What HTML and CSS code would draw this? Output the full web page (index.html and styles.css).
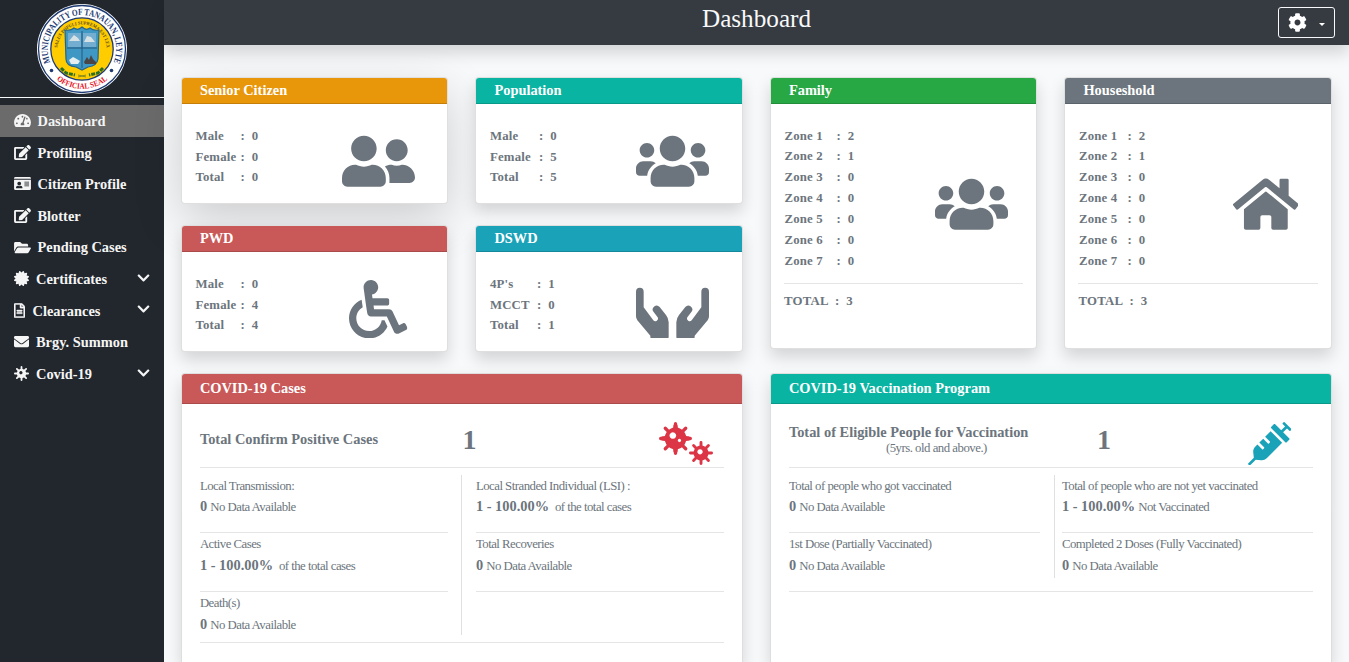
FILE: index.html
```html
<!DOCTYPE html>
<html lang="en">
<head>
<meta charset="utf-8">
<title>Dashboard</title>
<link rel="stylesheet" href="styles.css">
</head>
<body>
<svg width="0" height="0" class="defs">
<symbol id="users" viewBox="0 0 640 512"><path d="M96 224c35.3 0 64-28.7 64-64s-28.7-64-64-64-64 28.7-64 64 28.7 64 64 64zm448 0c35.3 0 64-28.7 64-64s-28.7-64-64-64-64 28.7-64 64 28.7 64 64 64zm32 32h-64c-17.6 0-33.5 7.1-45.1 18.6 40.3 22.1 68.9 62 75.1 109.4h66c17.7 0 32-14.3 32-32v-32c0-35.3-28.7-64-64-64zm-256 0c61.9 0 112-50.1 112-112S381.9 32 320 32 208 82.1 208 144s50.1 112 112 112zm76.8 32h-8.3c-20.8 10-43.9 16-68.5 16s-47.6-6-68.5-16h-8.3C179.6 288 128 339.6 128 403.2V432c0 26.5 21.5 48 48 48h288c26.5 0 48-21.5 48-48v-28.8c0-63.6-51.6-115.2-115.2-115.2zm-223.7-13.4C161.5 263.1 145.6 256 128 256H64c-35.3 0-64 28.7-64 64v32c0 17.7 14.3 32 32 32h65.9c6.3-47.4 34.9-87.3 75.2-109.4z"/></symbol>
<symbol id="friends" viewBox="0 0 640 512"><path d="M192 256c61.9 0 112-50.1 112-112S253.9 32 192 32 80 82.1 80 144s50.1 112 112 112zm76.8 32h-8.3c-20.8 10-43.9 16-68.5 16s-47.6-6-68.5-16h-8.3C51.6 288 0 339.6 0 403.2V432c0 26.5 21.5 48 48 48h288c26.5 0 48-21.5 48-48v-28.8c0-63.6-51.6-115.2-115.2-115.2zM480 256c53 0 96-43 96-96s-43-96-96-96-96 43-96 96 43 96 96 96zm48 32h-3.8c-13.9 4.8-28.6 8-44.2 8s-30.3-3.2-44.2-8H432c-20.4 0-39.2 5.9-55.7 15.4 24.4 26.3 39.7 61.2 39.7 99.8v38.4c0 2.2-.5 4.3-.6 6.4H592c26.5 0 48-21.5 48-48 0-61.9-50.1-112-112-112z"/></symbol>
<symbol id="wheelchair" viewBox="0 0 512 512"><path d="M496.101 385.669l14.227 28.663c3.929 7.915.697 17.516-7.218 21.445l-65.465 32.886c-16.049 7.967-35.556 1.194-43.189-15.055L331.679 320H192c-15.925 0-29.426-11.71-31.679-27.475C126.433 55.308 128.38 70.044 128 64c0-36.358 30.318-65.635 67.052-63.929 33.271 1.545 60.048 28.905 60.925 62.201.868 32.933-23.152 60.423-54.608 65.039l4.67 32.69H336c8.837 0 16 7.163 16 16v32c0 8.837-7.163 16-16 16H215.182l4.572 32H352a32 32 0 0 1 28.962 18.392L438.477 396.8l36.178-18.349c7.915-3.929 17.517-.697 21.446 7.218zM311.358 352h-24.506c-7.788 54.204-54.528 96-110.852 96-61.757 0-112-50.243-112-112 0-41.505 22.694-77.809 56.324-97.156-3.712-25.965-6.844-47.86-9.488-66.333C45.956 198.464 0 261.963 0 336c0 97.047 78.953 176 176 176 71.87 0 133.806-43.308 161.11-105.192L311.358 352z"/></symbol>
<symbol id="hands" viewBox="0 0 219 175"><path d="M0 35a11.500 11.500 0 0 1 23 0V82L52 121a8 8 0 0 0 13-9L53 96a11 11 0 0 1 18-15L90 105Q98 115 98 127V171Q98 175 94 175H47Q43 175 43 171V167L4 121Q0 116 0 109Z"/><path d="M219 35a11.500 11.500 0 0 0-23 0V82L167 121a8 8 0 0 1-13-9L166 96a11 11 0 0 0-18-15L129 105Q121 115 121 127V171Q121 175 125 175H172Q176 175 176 171V167L215 121Q219 116 219 109Z"/></symbol>
<symbol id="home" viewBox="0 0 576 512"><path d="M280.37 148.26L96 300.11V464a16 16 0 0 0 16 16l112.06-.29a16 16 0 0 0 15.92-16V368a16 16 0 0 1 16-16h64a16 16 0 0 1 16 16v95.64a16 16 0 0 0 16 16.05L464 480a16 16 0 0 0 16-16V300L295.67 148.26a12.19 12.19 0 0 0-15.3 0zM571.6 251.47L488 182.56V44.05a12 12 0 0 0-12-12h-56a12 12 0 0 0-12 12v72.61L318.47 43a48 48 0 0 0-61 0L4.34 251.47a12 12 0 0 0-1.6 16.9l25.500 31A12 12 0 0 0 45.15 301l235.22-193.74a12.19 12.19 0 0 1 15.3 0L530.9 301a12 12 0 0 0 16.9-1.6l25.500-31a12 12 0 0 0-1.7-16.93z"/></symbol>
<symbol id="gauge" viewBox="0 0 576 512"><path d="M288 32C128.94 32 0 160.94 0 320c0 52.8 14.25 102.26 39.06 144.8 5.61 9.62 16.3 15.2 27.44 15.2h443c11.14 0 21.83-5.58 27.44-15.2C561.75 422.26 576 372.8 576 320c0-159.06-128.94-288-288-288zm0 64c14.71 0 26.58 10.13 30.32 23.65-1.11 2.26-2.64 4.23-3.45 6.67l-9.22 27.67c-5.13 3.49-10.97 6.01-17.64 6.01-17.67 0-32-14.33-32-32S270.33 96 288 96zM96 384c-17.67 0-32-14.33-32-32s14.33-32 32-32 32 14.33 32 32-14.33 32-32 32zm48-160c-17.67 0-32-14.33-32-32s14.33-32 32-32 32 14.33 32 32-14.33 32-32 32zm246.77-72.41l-61.33 184C343.13 347.33 352 364.54 352 384c0 11.72-3.38 22.55-8.88 32H232.88c-5.5-9.45-8.88-20.28-8.88-32 0-33.94 26.5-61.43 59.9-63.59l61.34-184.01c4.17-12.56 17.73-19.45 30.36-15.17 12.57 4.19 19.35 17.79 15.17 30.36zm14.66 57.2l15.52-46.55c3.47-1.29 7.13-2.23 11.05-2.23 17.67 0 32 14.33 32 32s-14.33 32-32 32c-11.38-.01-20.89-6.28-26.57-15.22zM480 384c-17.67 0-32-14.33-32-32s14.33-32 32-32 32 14.33 32 32-14.33 32-32 32z"/></symbol>
<symbol id="edit" viewBox="0 0 576 512"><path d="M402.6 83.2l90.2 90.2c3.8 3.8 3.8 10 0 13.8L274.4 405.6l-92.8 10.3c-12.4 1.4-22.9-9.1-21.5-21.5l10.3-92.8L388.8 83.2c3.8-3.8 10-3.8 13.8 0zm162-22.9l-48.8-48.8c-15.2-15.2-39.9-15.2-55.2 0l-35.4 35.4c-3.8 3.8-3.8 10 0 13.8l90.2 90.2c3.8 3.8 10 3.8 13.8 0l35.4-35.4c15.2-15.3 15.2-40 0-55.2zM384 346.2V448H64V128h229.8c3.2 0 6.2-1.3 8.5-3.5l40-40c7.6-7.6 2.2-20.5-8.5-20.5H48C21.5 64 0 85.5 0 112v352c0 26.5 21.5 48 48 48h352c26.5 0 48-21.5 48-48V306.2c0-10.7-12.9-16-20.5-8.500l-40 40c-2.2 2.3-3.5 5.3-3.5 8.500z"/></symbol>
<symbol id="idcard" viewBox="0 0 576 512"><path fill-rule="evenodd" d="M0 80Q0 32 48 32H528Q576 32 576 80V96H0ZM0 128H576V432Q576 480 528 480H48Q0 480 0 432ZM64 398Q64 416 82 416H270Q288 416 288 398Q285 336 224 336Q200 346 176 346Q150 346 128 336Q67 336 64 398ZM176 192a64 64 0 1 0 .1 0ZM352 192V224H512V192ZM352 256V288H512V256ZM352 320V352H512V320Z"/></symbol>
<symbol id="folder" viewBox="0 0 576 512"><path d="M572.694 292.093L500.27 416.248A63.997 63.997 0 0 1 444.989 448H45.025c-18.523 0-30.064-20.093-20.731-36.093l72.424-124.155A64 64 0 0 1 152 256h399.964c18.523 0 30.064 20.093 20.73 36.093zM152 224h328v-48c0-26.51-21.49-48-48-48H272l-64-64H48C21.49 64 0 85.49 0 112v278.046l69.077-118.418C86.214 242.25 117.989 224 152 224z"/></symbol>
<symbol id="cert" viewBox="0 0 512 512"><path d="M458.622 255.92l45.985-45.005c13.708-12.977 7.316-36.039-10.664-40.339l-62.65-15.99 17.661-62.015c4.991-17.838-11.829-34.663-29.661-29.671l-61.994 17.667-15.984-62.671C337.085.197 313.765-6.276 300.99 7.228L256 53.57 211.011 7.229c-12.63-13.351-36.047-7.234-40.325 10.668l-15.984 62.671-61.995-17.667C74.87 57.907 58.056 74.738 63.046 92.572l17.661 62.015-62.65 15.99C.069 174.878-6.31 197.944 7.392 210.915l45.985 45.005-45.985 45.004c-13.708 12.977-7.316 36.039 10.664 40.339l62.65 15.99-17.661 62.015c-4.991 17.838 11.829 34.663 29.661 29.671l61.994-17.667 15.984 62.671c4.439 18.575 27.696 24.018 40.325 10.668L256 458.61l44.989 46.001c12.5 13.488 35.987 7.486 40.325-10.668l15.984-62.671 61.994 17.667c17.836 4.994 34.651-11.837 29.661-29.671l-17.661-62.015 62.65-15.99c17.987-4.302 24.366-27.367 10.664-40.339l-45.984-45.004z"/></symbol>
<symbol id="file" viewBox="0 0 384 512"><path stroke="currentColor" stroke-width="14" d="M288 248v28c0 6.6-5.4 12-12 12H108c-6.6 0-12-5.4-12-12v-28c0-6.6 5.4-12 12-12h168c6.6 0 12 5.4 12 12zm-12 72H108c-6.6 0-12 5.4-12 12v28c0 6.6 5.4 12 12 12h168c6.6 0 12-5.4 12-12v-28c0-6.6-5.4-12-12-12zm108-188.1V464c0 26.5-21.5 48-48 48H48c-26.5 0-48-21.5-48-48V48C0 21.5 21.5 0 48 0h204.1C264.8 0 277 5.1 286 14.1L369.9 98c9 8.9 14.1 21.2 14.1 33.9zm-128-80V128h76.1L256 51.9zM336 464V176H232c-13.3 0-24-10.7-24-24V48H48v416h288z"/></symbol>
<symbol id="mail" viewBox="0 0 512 512"><path d="M502.3 190.8c3.9-3.1 9.7-.2 9.7 4.7V400c0 26.5-21.5 48-48 48H48c-26.5 0-48-21.5-48-48V195.6c0-5 5.7-7.8 9.7-4.7 22.4 17.4 52.1 39.5 154.1 113.6 21.1 15.4 56.7 47.8 92.2 47.6 35.7.3 72-32.8 92.3-47.6 102-74.1 131.6-96.3 154-113.7zM256 320c23.2.4 56.6-29.2 73.4-41.4 132.7-96.3 142.8-104.7 173.4-128.7 5.8-4.5 9.2-11.5 9.2-18.9v-19c0-26.5-21.5-48-48-48H48c-26.5 0-48 21.5-48 48v19c0 7.4 3.4 14.3 9.2 18.9 30.6 23.9 40.7 32.4 173.4 128.7 16.8 12.2 50.2 41.8 73.4 41.4z"/></symbol>
<symbol id="chevron" viewBox="0 0 448 512"><path d="M207.029 381.476L12.686 187.132c-9.373-9.373-9.373-24.569 0-33.941l22.667-22.667c9.357-9.357 24.522-9.375 33.901-.04L224 284.505l154.745-154.021c9.379-9.335 24.544-9.317 33.901.04l22.667 22.667c9.373 9.373 9.373 24.569 0 33.941L240.971 381.476c-9.373 9.372-24.569 9.372-33.942 0z"/></symbol>
<symbol id="cog" viewBox="0 0 512 512"><path d="M487.4 315.7l-42.6-24.6c4.3-23.2 4.3-47 0-70.2l42.6-24.6c4.9-2.8 7.1-8.6 5.5-14-11.1-35.6-30-67.8-54.7-94.6-3.8-4.1-10-5.1-14.8-2.3L380.8 110c-17.9-15.4-38.5-27.3-60.8-35.1V25.8c0-5.6-3.9-10.5-9.4-11.7-36.7-8.2-74.3-7.8-109.2 0-5.5 1.2-9.4 6.1-9.4 11.7V75c-22.2 7.9-42.8 19.8-60.8 35.1L88.7 85.5c-4.9-2.8-11-1.9-14.8 2.3-24.7 26.7-43.6 58.9-54.7 94.6-1.7 5.4.6 11.2 5.5 14L67.3 221c-4.3 23.2-4.3 47 0 70.2l-42.6 24.6c-4.9 2.8-7.1 8.6-5.5 14 11.1 35.6 30 67.8 54.7 94.6 3.8 4.1 10 5.1 14.8 2.3l42.6-24.6c17.9 15.4 38.5 27.3 60.8 35.1v49.2c0 5.6 3.9 10.5 9.4 11.7 36.7 8.2 74.3 7.8 109.2 0 5.5-1.2 9.4-6.1 9.4-11.7v-49.2c22.2-7.9 42.8-19.8 60.8-35.1l42.6 24.6c4.9 2.8 11 1.9 14.8-2.3 24.7-26.7 43.6-58.9 54.7-94.6 1.5-5.5-.7-11.3-5.6-14.1zM256 336c-44.1 0-80-35.9-80-80s35.9-80 80-80 80 35.9 80 80-35.9 80-80 80z"/></symbol>
<symbol id="syringe" viewBox="0 0 512 512"><path d="M201.5 174.8l55.7 55.8c3.1 3.1 3.1 8.2 0 11.3l-11.3 11.3c-3.1 3.1-8.2 3.1-11.3 0l-55.7-55.8-45.3 45.3 55.8 55.8c3.1 3.1 3.1 8.2 0 11.3l-11.3 11.3c-3.1 3.1-8.2 3.1-11.3 0L111 265.2l-26.4 26.4c-17.3 17.3-25.6 41.1-23 65.4l7.1 63.6L2.3 487c-3.1 3.1-3.1 8.2 0 11.3l11.3 11.3c3.1 3.1 8.2 3.1 11.3 0l66.3-66.3 63.6 7.1c23.9 2.6 47.9-5.4 65.4-23l181.9-181.9-135.7-135.7-64.9 65zm308.2-93.3L430.5 2.3c-3.1-3.1-8.2-3.1-11.3 0l-11.3 11.3c-3.1 3.1-3.1 8.2 0 11.3l28.3 28.3-45.3 45.3-56.6-56.6-17-17c-3.1-3.1-8.2-3.1-11.3 0l-33.9 33.9c-3.1 3.1-3.1 8.2 0 11.3l17 17L424.8 223l17 17c3.1 3.1 8.2 3.1 11.3 0l33.9-34c3.1-3.1 3.1-8.2 0-11.3l-73.5-73.5 45.3-45.3 28.3 28.3c3.1 3.1 8.2 3.1 11.3 0l11.3-11.3c3.1-3.2 3.1-8.2 0-11.4z"/></symbol>
<symbol id="virus" viewBox="0 0 100 100"><path fill-rule="evenodd" d="M50 17a33 33 0 1 0 .1 0ZM42 31a10 10 0 1 1-.1 0ZM62 51a5 5 0 1 1-.1 0Z"/><path d="M50 5V22M50 78V95M5 50H22M78 50H95M19 19L30 30M70 70L81 81M81 19L70 30M19 81L30 70" fill="none" stroke="currentColor" stroke-width="10" stroke-linecap="round"/><path d="M44 8L42 24H58L56 8ZM44 92L42 76H58L56 92ZM8 44L24 42V58L8 56ZM92 44L76 42V58L92 56Z"/></symbol>
<symbol id="virus-small" viewBox="0 0 100 100"><path fill-rule="evenodd" d="M50 19a31 31 0 1 0 .1 0ZM46 34a11 11 0 1 1-.1 0Z"/><path d="M50 6V22M50 78V94M6 50H22M78 50H94M19 19L30 30M70 70L81 81M81 19L70 30M19 81L30 70" fill="none" stroke="currentColor" stroke-width="12" stroke-linecap="round"/></symbol>
</svg>

<div class="app">
<aside class="sidebar">
  <div class="brand">
    <svg class="seal" viewBox="0 0 90 90">
      <defs><path id="arcTop" d="M14.200 60A34.200 34.200 0 1 1 75.800 60"/><path id="arcMid" d="M20.500 45A24.500 24.500 0 0 1 69.500 45"/><path id="arcBot" d="M11 66A40.200 40.200 0 0 0 79 66"/></defs>
      <circle cx="45" cy="45" r="45" fill="#fff"/><circle cx="45" cy="45" r="43.500" fill="none" stroke="#1d3a73" stroke-width="1.300"/>
      <circle cx="45" cy="45" r="31.200" fill="#fc0" stroke="#1d3a73" stroke-width="1.300"/>
      <text class="seal-top"><textPath href="#arcTop" startOffset="50%" textLength="134" lengthAdjust="spacingAndGlyphs" text-anchor="middle">MUNICIPALITY OF TANAUAN, LEYTE</textPath></text>
      <text class="seal-bot"><textPath href="#arcBot" startOffset="50%" textLength="55" lengthAdjust="spacingAndGlyphs" text-anchor="middle">OFFICIAL SEAL</textPath></text>
      <text class="seal-mid"><textPath href="#arcMid" startOffset="50%" textLength="74" lengthAdjust="spacingAndGlyphs" text-anchor="middle">SALUS POPULI SUPREMA EST LEX</textPath></text>
      <path d="M28 26Q34 27 37 24Q41 27 45 23Q49 27 53 24Q56 27 62 26L61 55Q60 62 51 63L45 66L39 63Q29 62 29 55Z" fill="#3f98c4" stroke="#27638b" stroke-width="1.200"/>
      <path d="M31 29H44V43H31ZM46 29H59V43H46Z" fill="#73add0"/>
      <path d="M32 37L37 31L41 34L43 37ZM47 38L50 32L54 33L58 38Z" fill="#d6e2e6"/>
      <path d="M30 44H60M45 27V64" stroke="#24577d" stroke-width="1"/>
      <path d="M32 56L36 53L38 54L43 57L41 60H34Z" fill="#e4edf0"/>
      <path d="M47 58L50 53L52 56L54 51L56 55L59 58V60H48Z" fill="#4a4546"/>
      <path d="M24 64L29 69L38 71M66 64L61 69L52 71" stroke="#2b6f25" stroke-width="3" stroke-dasharray="4 1" fill="none"/>
      <path d="M41 71L49 73M49 71L41 73" stroke="#6b7a22" stroke-width=".8"/>
      <circle cx="14.500" cy="66.500" r="1.800" fill="#1d3a73"/><circle cx="74.500" cy="66.500" r="1.800" fill="#1d3a73"/>
    </svg>
  </div>
  <nav class="menu">
    <a class="item active"><svg class="w18"><use href="#gauge"/></svg><span>Dashboard</span></a>
    <a class="item"><svg class="w18"><use href="#edit"/></svg><span>Profiling</span></a>
    <a class="item"><svg class="w18"><use href="#idcard"/></svg><span>Citizen Profile</span></a>
    <a class="item"><svg class="w18"><use href="#edit"/></svg><span>Blotter</span></a>
    <a class="item"><svg class="w18"><use href="#folder"/></svg><span>Pending Cases</span></a>
    <a class="item"><svg class="w16"><use href="#cert"/></svg><span>Certificates</span><svg class="chev"><use href="#chevron"/></svg></a>
    <a class="item"><svg class="w12"><use href="#file"/></svg><span>Clearances</span><svg class="chev"><use href="#chevron"/></svg></a>
    <a class="item"><svg class="w16"><use href="#mail"/></svg><span>Brgy. Summon</span></a>
    <a class="item"><svg class="w16"><use href="#virus-small"/></svg><span>Covid-19</span><svg class="chev"><use href="#chevron"/></svg></a>
  </nav>
</aside>

<div class="page">
  <header class="topbar">
    <h1>Dashboard</h1>
    <button class="settings"><svg class="gear"><use href="#cog"/></svg><i class="caret"></i></button>
  </header>
  <main class="content">
    <section class="stats">
      <div class="stack">
        <article class="card raised"><h2 class="orange">Senior Citizen</h2><div class="body">
          <dl class="list"><dt>Male</dt><dd>: &nbsp;0</dd><dt>Female</dt><dd>: &nbsp;0</dd><dt>Total</dt><dd>: &nbsp;0</dd></dl>
          <svg class="icon wide"><use href="#friends"/></svg></div></article>
        <article class="card"><h2 class="red">PWD</h2><div class="body">
          <dl class="list"><dt>Male</dt><dd>: &nbsp;0</dd><dt>Female</dt><dd>: &nbsp;4</dd><dt>Total</dt><dd>: &nbsp;4</dd></dl>
          <svg class="icon square"><use href="#wheelchair"/></svg></div></article>
      </div>
      <div class="stack">
        <article class="card"><h2 class="teal">Population</h2><div class="body">
          <dl class="list l49"><dt>Male</dt><dd>: &nbsp;0</dd><dt>Female</dt><dd>: &nbsp;5</dd><dt>Total</dt><dd>: &nbsp;5</dd></dl>
          <svg class="icon wide"><use href="#users"/></svg></div></article>
        <article class="card"><h2 class="cyan">DSWD</h2><div class="body">
          <dl class="list l47"><dt>4P's</dt><dd>: &nbsp;1</dd><dt>MCCT</dt><dd>: &nbsp;0</dd><dt>Total</dt><dd>: &nbsp;1</dd></dl>
          <svg class="icon wide"><use href="#hands"/></svg></div></article>
      </div>
      <article class="card tall"><h2 class="green">Family</h2><div class="body">
        <dl class="list l52"><dt>Zone 1</dt><dd>: &nbsp;2</dd><dt>Zone 2</dt><dd>: &nbsp;1</dd><dt>Zone 3</dt><dd>: &nbsp;0</dd><dt>Zone 4</dt><dd>: &nbsp;0</dd><dt>Zone 5</dt><dd>: &nbsp;0</dd><dt>Zone 6</dt><dd>: &nbsp;0</dd><dt>Zone 7</dt><dd>: &nbsp;0</dd></dl>
        <svg class="icon wide near"><use href="#users"/></svg></div>
        <p class="total">TOTAL &nbsp;: &nbsp;3</p></article>
      <article class="card tall"><h2 class="gray">Houseshold</h2><div class="body">
        <dl class="list l48"><dt>Zone 1</dt><dd>: &nbsp;2</dd><dt>Zone 2</dt><dd>: &nbsp;1</dd><dt>Zone 3</dt><dd>: &nbsp;0</dd><dt>Zone 4</dt><dd>: &nbsp;0</dd><dt>Zone 5</dt><dd>: &nbsp;0</dd><dt>Zone 6</dt><dd>: &nbsp;0</dd><dt>Zone 7</dt><dd>: &nbsp;0</dd></dl>
        <svg class="icon house"><use href="#home"/></svg></div>
        <p class="total">TOTAL &nbsp;: &nbsp;3</p></article>
    </section>

    <section class="reports">
      <article class="card report"><h2 class="red">COVID-19 Cases</h2>
        <div class="summary cases"><h3>Total Confirm Positive Cases</h3><b class="count">1</b>
          <span class="viruses"><svg class="v1"><use href="#virus"/></svg><svg class="v2"><use href="#virus-small"/></svg></span></div>
        <div class="details dcases">
          <div><div class="item1"><p>Local Transmission:</p><p><b>0</b> No Data Available</p></div>
            <div class="item2"><p>Active Cases</p><p><b>1 - 100.00%</b> &nbsp;of the total cases</p></div>
            <div class="item3"><p>Death(s)</p><p><b>0</b> No Data Available</p></div></div>
          <i class="divider"></i>
          <div><div class="item1"><p>Local Stranded Individual (LSI) :</p><p><b>1 - 100.00%</b> &nbsp;of the total cases</p></div>
            <div class="item2"><p>Total Recoveries</p><p><b>0</b> No Data Available</p></div></div>
        </div>
      </article>
      <article class="card report"><h2 class="teal">COVID-19 Vaccination Program</h2>
        <div class="summary vacc"><div><h3>Total of Eligible People for Vaccination</h3><p class="note">(5yrs. old and above.)</p></div><b class="count">1</b>
          <svg class="syringe"><use href="#syringe"/></svg></div>
        <div class="details dvacc">
          <div><div class="item1"><p>Total of people who got vaccinated</p><p><b>0</b> No Data Available</p></div>
            <div class="item2 last"><p>1st Dose (Partially Vaccinated)</p><p><b>0</b> No Data Available</p></div></div>
          <i class="divider"></i>
          <div><div class="item1"><p>Total of people who are not yet vaccinated</p><p><b>1 - 100.00%</b> Not Vaccinated</p></div>
            <div class="item2 last"><p>Completed 2 Doses (Fully Vaccinated)</p><p><b>0</b> No Data Available</p></div></div>
        </div>
      </article>
    </section>
  </main>
</div>
</div>
</body>
</html>
```

FILE: styles.css
```css
* { box-sizing: border-box; margin: 0; padding: 0; }
html, body { height: 100%; overflow: hidden; }
body { font-family: "Liberation Serif", "Times New Roman", serif; background: #f8f9fa; color: #6c757d; }
svg { fill: currentColor; flex: none; display: block; }
.defs { position: absolute; }
.app { display: flex; height: 662px; overflow: hidden; }

.sidebar { width: 164px; flex: none; background: #22272e; color: #f5f5f5; }
.brand { height: 98px; border-bottom: 1px solid #f8f9fa; display: flex; justify-content: center; padding-top: 4px; }
.seal { width: 90px; height: 90px; }
.seal text { font-weight: bold; }
.seal-top { font-size: 9.2px; fill: #1d3a73; }
.seal-bot { font-size: 8px; fill: #e8131d; }
.seal-mid { font-size: 4.8px; fill: #59491b; }
.menu { padding-top: 7px; }
.item { display: flex; align-items: center; height: 31.6px; padding: 0 14px; font-size: 14.4px; font-weight: bold; }
.item span { position: relative; top: .75px; }
.active { background: #6b6b6b; }
.w18 { width: 17px; height: 15px; }
.w18 + span { margin-left: 6.500px; }
.w16 { width: 15px; height: 15px; }
.w16 + span { margin-left: 7px; }
.w12 { width: 11px; height: 15px; }
.w12 + span { margin-left: 7.500px; }
.chev { width: 13px; height: 14px; margin: -2px 0 0 auto; }

.page { flex: 1; min-width: 0; display: flex; flex-direction: column; }
.topbar { height: 45px; flex: none; background: #363a41; color: #f8f9fa; display: grid; grid-template-columns: 1fr auto 1fr; align-items: start; box-shadow: 0 8px 16px rgba(0,0,0,.15); }
.topbar h1 { grid-column: 2; font-size: 25.2px; font-weight: normal; line-height: 37px; }
.settings { justify-self: end; margin: 7px 14px 0 0; width: 57px; height: 31px; border: 1px solid #f8f9fa; border-radius: 3px; background: none; color: #fff; display: flex; align-items: center; padding-left: 8.500px; gap: 12px; }
.gear { width: 19px; height: 19px; }
.caret { border: 3.5px solid transparent; border-top-color: #fff; border-bottom: 0; margin-top: 3px; }

.content { padding: 32px 17.1px 0 16.9px; flex: 1; min-height: 0; display: flex; flex-direction: column; }
.stats { display: grid; grid-template-columns: repeat(4, 1fr); gap: 27px; align-items: start; height: 296px; flex: none; }
.stack { display: flex; flex-direction: column; gap: 21px; }
.card { background: #fff; border: 1px solid rgba(0,0,0,.125); border-radius: 4px; box-shadow: 0 8px 16px rgba(0,0,0,.15); height: 127px; }
.raised { box-shadow: 0 16px 48px rgba(0,0,0,.175); }
.tall { height: 272px; }
.card h2 { height: 26px; line-height: 25px; padding-left: 18px; font-size: 14.4px; font-weight: bold; color: #fff; border-bottom: 1px solid rgba(0,0,0,.15); border-radius: 3px 3px 0 0; }
.orange { background: #e8960a; }
.red { background: #c95858; }
.teal { background: #0ab4a2; }
.cyan { background: #19a2b8; }
.green { background: #28a745; }
.gray { background: #6c757d; }
.body { display: flex; justify-content: space-between; align-items: flex-start; padding: 21.6px 32.6px 0 13.500px; }
.list { display: grid; grid-template-columns: 45px auto; font-size: 12.8px; font-weight: bold; line-height: 20.83px; letter-spacing: .2px; }
.stack .list { line-height: 20.600px; padding-top: .5px; }
.l49 { grid-template-columns: 49px auto; }
.l47 { grid-template-columns: 47px auto; }
.l52 { grid-template-columns: 52px auto; }
.l48 { grid-template-columns: 48.500px auto; }
.wide { width: 73px; height: 58.400px; margin-top: 6.4px; }
.square { width: 58.400px; height: 58.400px; margin: 6.4px 7px 0 0; }
.near { margin: 49.4px -4px 0 0; }
.house { width: 65.700px; height: 58.400px; margin: 49.4px 0 0 0; }
.total { margin: 11.2px 13px 0; border-top: 1px solid rgba(0,0,0,.1); line-height: 20px; padding-top: 7px; font-size: 12.8px; font-weight: bold; letter-spacing: .25px; }

.reports { flex: 1; min-height: 0; display: grid; grid-template-columns: 1fr 1fr; gap: 27px; }
.report { height: 100%; border-bottom: 0; border-radius: 4px 4px 0 0; }
.report h2 { height: 30px; line-height: 29px; }
.summary { margin: 0 18px; height: 64px; border-bottom: 1px solid rgba(0,0,0,.1); display: grid; align-items: center; }
.cases { grid-template-columns: 262.5px 196.5px auto; }
.vacc { grid-template-columns: 308px 151px auto; }
.summary h3 { font-size: 14.4px; line-height: 17px; padding-top: 7px; }
.vacc h3 { padding: 8px 0 0; line-height: 16px; white-space: nowrap; }
.vacc .note { width: 239px; padding-left: 56px; text-align: center; font-size: 12.800px; line-height: 16px; letter-spacing: -.5px; }
.count { font-size: 28px; line-height: 32px; padding-top: 8px; }
.viruses { color: #dc3545; display: flex; padding-top: 15px; }
.v1 { width: 33px; height: 33px; }
.v2 { width: 24px; height: 24px; margin: 19px 0 0 -3px; }
.syringe { width: 43.500px; height: 43.500px; color: #19a2b8; margin-top: 16px; }
.details { margin: 0 18px; display: grid; border-bottom: 1px solid rgba(0,0,0,.1); font-size: 12.8px; line-height: 20px; letter-spacing: -.52px; }
.dcases { grid-template-columns: 248px 1px 248px; justify-content: space-between; height: 175px; }
.dvacc { grid-template-columns: 251px 1px 251px; justify-content: space-between; height: 124px; }
.divider { background: rgba(0,0,0,.12); margin: 7px 0 7px -.6px; width: 1px; }
.dvacc .divider { margin: 7px 0 14px 3.6px; }
.details b { font-size: 14.4px; letter-spacing: 0; margin-right: .5px; line-height: 18px; }
.item1 { height: 65px; padding-top: 8px; border-bottom: 1px solid rgba(0,0,0,.1); }
.item1 p + p { margin-top: 1px; }
.item2 { height: 59px; padding-top: 1px; border-bottom: 1px solid rgba(0,0,0,.1); }
.item3 { padding-top: 1px; }
.item2 p + p, .item3 p + p { margin-top: 2px; }
.last { border-bottom: 0; }
.details p { white-space: nowrap; }
```
